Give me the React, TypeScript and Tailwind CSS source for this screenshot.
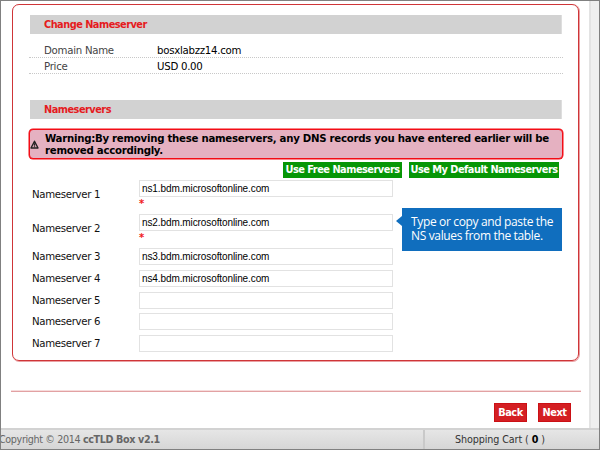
import React from "react";

const verdana = "font-['DejaVu_Sans',Verdana,sans-serif]";

function SectionBar({ title }: { title: string }) {
  return (
    <h2 className="ml-[17px] flex h-[19px] w-[532px] items-center border-r border-[#dedede] bg-[#d2d2d2] pl-[14px] pt-[2px] text-[9.8px] font-bold tracking-[-0.52px] text-[#e51b1e]">
      {title}
    </h2>
  );
}

function DetailRow({ label, value }: { label: string; value: string }) {
  return (
    <div className="ml-[16px] flex h-4 gap-px text-[10.2px] leading-[17px] tracking-[-0.27px]">
      <div className="w-28 border-b border-dotted border-[#c8c8c8] pl-[15px] text-[#444]">{label}</div>
      <div className="w-[335px] border-b border-dotted border-[#c8c8c8] pl-[15px] text-black">{value}</div>
      <div className="w-[85px] border-b border-dotted border-[#c8c8c8]" />
    </div>
  );
}

function NameserverRow({ index, value, required }: { index: number; value: string; required?: boolean }) {
  return (
    <div className={required ? "flex h-[34px]" : "flex h-[21.8px]"}>
      <label
        className={`w-[107px] text-[10.2px] leading-4 tracking-[-0.32px] text-[#111] ${required ? "pt-[7px]" : "pt-px"}`}
      >
        Nameserver {index}
      </label>
      <div>
        <input
          className="block h-[17px] w-[254px] border border-[#e2e2e2] bg-white pl-[2px] font-['Liberation_Sans',Arial,sans-serif] text-[10px] tracking-[-0.1px] text-black outline-none"
          defaultValue={value}
        />
        {required && <div className="h-3 pt-px text-[10px] font-bold leading-3 text-[#f01820]">*</div>}
      </div>
    </div>
  );
}

export default function App() {
  return (
    <div className={`relative flex h-[450px] w-[600px] flex-col overflow-hidden border border-[#808080] bg-white ${verdana}`}>
      <div className="flex h-[427px]">
        <main className="w-[588px] pl-[11px] pt-[3px]">
          <section className="h-[357px] w-[567px] rounded-[7px] border border-[#cf3538] pt-[10px] shadow-[0.5px_0.5px_0_0.5px_#eaa0a3]">
            <SectionBar title="Change Nameserver" />
            <div className="pt-[8px]">
              <DetailRow label="Domain Name" value="bosxlabzz14.com" />
              <DetailRow label="Price" value="USD 0.00" />
            </div>
            <div className="h-[26px]" />
            <SectionBar title="Nameservers" />
            <div className="ml-[16px] mt-[10px] flex h-[30px] w-[534px] items-center rounded-[4px] border border-[#f30c15] bg-[#e5b1c1] shadow-[0_0_0_0.5px_#f30c15]">
              <svg className="mr-[6px] h-[9px] w-[9px] shrink-0" viewBox="0 0 9 9">
                <path d="M4.5 1.2 8 8H1Z" fill="none" stroke="#222" strokeWidth="1.4" strokeLinejoin="round" />
                <path d="M4.5 3.2V5.8M4.5 6.3V7.3" stroke="#222" strokeWidth="1.3" />
              </svg>
              <p className="whitespace-nowrap pt-[2px] text-[10.2px] font-bold leading-[12px] tracking-[-0.27px] text-black">
                Warning:By removing these nameservers, any DNS records you have entered earlier will be
                <br />
                removed accordingly.
              </p>
            </div>
            <div className="mt-[3px] flex justify-end gap-[7px] pr-[19px] text-[9.8px] font-bold tracking-[-0.5px] text-white">
              <button className="h-4 w-[119px] whitespace-nowrap bg-[#069606]">Use Free Nameservers</button>
              <button className="h-4 w-[150px] whitespace-nowrap bg-[#069606]">Use My Default Nameservers</button>
            </div>
            <div className="ml-[19px] mt-[2px]">
              <NameserverRow index={1} value="ns1.bdm.microsoftonline.com" required />
              <NameserverRow index={2} value="ns2.bdm.microsoftonline.com" required />
              <NameserverRow index={3} value="ns3.bdm.microsoftonline.com" />
              <NameserverRow index={4} value="ns4.bdm.microsoftonline.com" />
              <NameserverRow index={5} value="" />
              <NameserverRow index={6} value="" />
              <NameserverRow index={7} value="" />
            </div>
          </section>
          <div className="-ml-px mt-[29px] h-[2px] w-[570px] border-b border-[#e2a1a3] bg-[#f6dcdc]" />
          <div className="mt-[11px] flex justify-end gap-[11px] pr-[18px] text-[9.8px] font-bold tracking-[-0.45px] text-white">
            <button className="h-[19px] w-[33px] border border-[#cb1015] bg-[#d41f23] pt-[2px]">Back</button>
            <button className="h-[19px] w-[33px] border border-[#cb1015] bg-[#d41f23] pt-[2px]">Next</button>
          </div>
        </main>
        <aside className="flex-1 border-l-2 border-[#e3e3e3] bg-[#efefef]" />
      </div>
      <footer className="flex h-[21px] border-t-2 border-[#d2d2d2] bg-linear-to-b from-[#e6e6e6] to-[#d6d6d6] text-[9.6px] leading-[19px]">
        <div className="-ml-[2px] w-[426px] border-r-2 border-[#c9c9c9] tracking-[-0.36px] text-[#666]">
          Copyright © 2014 <b>ccTLD Box v2.1</b>
        </div>
        <div className="pl-[30px] tracking-[-0.1px] text-[#333]">
          Shopping Cart ( <b className="text-black">0</b> )
        </div>
      </footer>
      <div className="absolute left-[401px] top-[207px] h-[43px] w-[160px] bg-[#106ebe] pl-[9px] pt-[7px] font-['Open_Sans','Noto_Sans',sans-serif] text-[12px] leading-[14px] tracking-[-0.35px] text-white">
        <svg className="absolute -left-[6px] top-[8px] h-[10px] w-[6px]" viewBox="0 0 6 10">
          <path d="M6 0 0 5 6 10Z" fill="#106ebe" />
        </svg>
        <p className="whitespace-nowrap">
          Type or copy and paste the
          <br />
          NS values from the table.
        </p>
      </div>
    </div>
  );
}
